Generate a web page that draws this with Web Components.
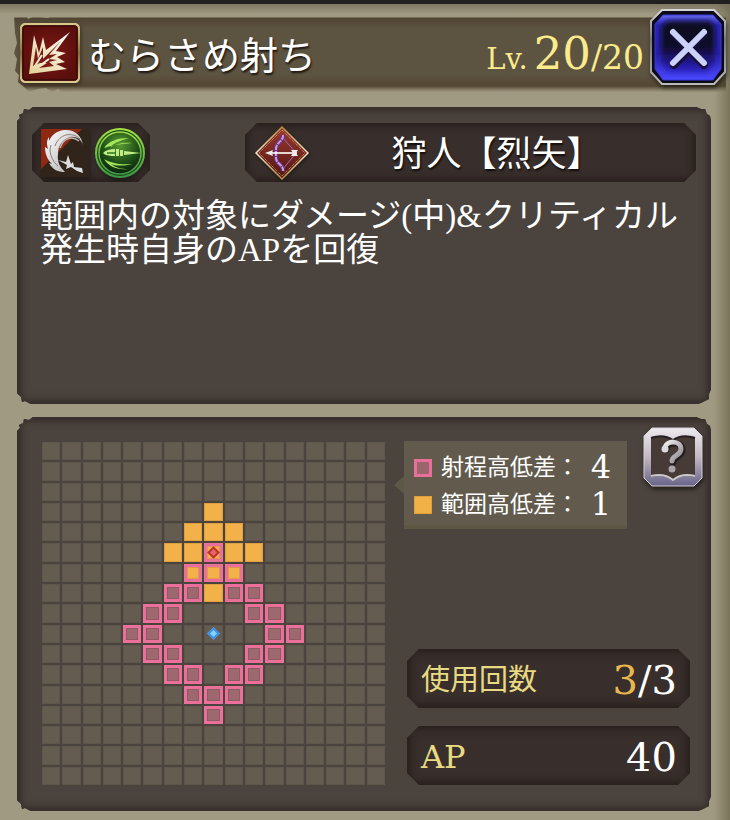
<!DOCTYPE html>
<html lang="ja">
<head>
<meta charset="utf-8">
<meta name="viewport" content="width=device-width, initial-scale=1">
<title>むらさめ射ち</title>
<style>
  body {
    margin: 0;
    min-height: 100vh;
    box-sizing: border-box;
    border-top: 4px solid #211f20;
    background:
      linear-gradient(#6f6855, transparent 14px),
      linear-gradient(to left, #79745a, transparent 16px),
      #a09a82;
    color: #fff;
    font-family: "DejaVu Serif", "Noto Sans CJK JP", serif;
  }
  main {
    display: grid;
    gap: 13px;
    padding: 0 19px 8px 17px;
  }
  h1, h2, p { margin: 0; font: inherit; }
</style>
</head>
<body>
<skill-header>
  <skill-icon slot="icon" name="burst"></skill-icon>
  <h1>むらさめ射ち</h1>
  <level-label slot="level" value="20" max="20"></level-label>
  <icon-button slot="action" kind="close" label="閉じる"></icon-button>
</skill-header>
<main>
  <torn-panel>
    <skill-summary>
      <skill-icon slot="types" name="slash"></skill-icon>
      <skill-icon slot="types" name="pierce"></skill-icon>
      <skill-icon slot="job-icon" name="bow"></skill-icon>
      <h2 slot="job">狩人【烈矢】</h2>
      <p>範囲内の対象にダメージ(中)&amp;クリティカル発生時自身のAPを回復</p>
    </skill-summary>
  </torn-panel>
  <torn-panel>
    <skill-range>
      <range-grid slot="grid"></range-grid>
      <range-legend slot="legend">
        <legend-row kind="range" value="4">射程高低差：</legend-row>
        <legend-row kind="area" value="1">範囲高低差：</legend-row>
      </range-legend>
      <icon-button slot="help" kind="help" label="ヘルプ"></icon-button>
      <stat-row label="使用回数"><b>3</b>/3</stat-row>
      <stat-row label="AP">40</stat-row>
    </skill-range>
  </torn-panel>
</main>

<script>
const define = (name, html) => {
  customElements.define(name, class extends HTMLElement {
    constructor() {
      super();
      this.attachShadow({ mode: "open" }).innerHTML = html;
    }
  });
};

define("skill-header", `
  <style>
    :host {
      position: relative;
      display: flex;
      align-items: center;
      height: 71px;
      margin: 13px 4px 19px 14px;
      padding-left: 6px;
    }
    /* band with a ragged left end */
    .band {
      position: absolute;
      inset: -2px 0 -4px 0;
      z-index: -1;
      background: linear-gradient(transparent 2px, #504433 3px, #5d5341 14px, #5d5341 60px, #544632 71px, #6f6550 73px, transparent 77px);
      clip-path: polygon(0 0, 12px 0, 14px 4px, 20px 1px, 34px 3px, 38px 0, 42px 2px, 100% 2px, 100% 100%, 48px 100%, 44px 74px, 38px 77px, 32px 73px, 24px 74px, 15px 77px, 10px 72px, 4px 67px, 5px 60px, 1px 56px, 3px 44px, 0 38px, 3px 28px, 1px 18px);
    }
    .title {
      flex: 1;
      margin: 6px 0 0 8px;
      font-size: 38px;
      line-height: 48px;
      white-space: nowrap;
      text-shadow: 1px 2px 2px #1c1610;
    }
    slot[name="level"] {
      display: block;
      padding-top: 8px;
    }
    slot[name="action"] {
      display: block;
      align-self: flex-start;
      margin: -8px 0 0 6px;
    }
  </style>
  <div class="band"></div>
  <slot name="icon"></slot>
  <div class="title"><slot></slot></div>
  <slot name="level"></slot>
  <slot name="action"></slot>
`);

define("torn-panel", `
  <style>
    :host {
      display: block;
      background: #4b433d;
      box-shadow: inset 0 0 3px 3px #39302f, inset 0 0 10px 3px #342d28;
      clip-path: polygon(
        0 14px, 3px 11px, 2px 8px, 6px 6px, 7px 2px, 12px 3px, 16px 0,
        calc(100% - 15px) 0, calc(100% - 10px) 2px, calc(100% - 6px) 2px, calc(100% - 4px) 7px, calc(100% - 1px) 9px, 100% 15px,
        100% calc(100% - 15px), calc(100% - 2px) calc(100% - 10px), calc(100% - 2px) calc(100% - 5px), calc(100% - 8px) calc(100% - 2px), calc(100% - 13px) 100%, calc(100% - 18px) 100%,
        14px 100%, 8px calc(100% - 3px), 5px calc(100% - 2px), 4px calc(100% - 7px), 0 calc(100% - 11px)
      );
    }
  </style>
  <slot></slot>
`);

define("cut-box", `
  <style>
    :host {
      display: flex;
      align-items: center;
      box-sizing: border-box;
      height: 59px;
      background: #382f2c;
      box-shadow: inset 0 0 9px 3px #271d1a;
      clip-path: polygon(12px 0, calc(100% - 12px) 0, 100% 12px, 100% calc(100% - 12px), calc(100% - 12px) 100%, 12px 100%, 0 calc(100% - 12px), 0 12px);
    }
  </style>
  <slot></slot>
`);

define("skill-summary", `
  <style>
    :host {
      display: block;
      box-sizing: border-box;
      min-height: 297px;
      padding: 16px 15px;
    }
    .top {
      display: flex;
      justify-content: space-between;
    }
    .types { gap: 6px; padding: 0 5px 0 9px; }
    .job { flex: 0 1 451px; padding: 0 12px 0 10px; }
    .job-name {
      flex: 1;
      padding-top: 2px;
      text-align: center;
      font-size: 35px;
      line-height: 48px;
      white-space: nowrap;
      text-shadow: 1px 2px 2px #120c0a;
    }
    .text {
      padding: 17px 0 0 8px;
      font: 33px/34px "Liberation Serif", "Noto Sans CJK JP", serif;
    }
  </style>
  <div class="top">
    <cut-box class="types"><slot name="types"></slot></cut-box>
    <cut-box class="job">
      <slot name="job-icon"></slot>
      <div class="job-name"><slot name="job"></slot></div>
    </cut-box>
  </div>
  <div class="text"><slot></slot></div>
`);

define("skill-range", `
  <style>
    :host {
      display: grid;
      grid-template-columns: 343fr 286fr;
      gap: 19px;
      padding: 25px 21px 26px 25px;
    }
    .side {
      display: flex;
      flex-direction: column;
      justify-content: space-between;
    }
    .top {
      display: flex;
      justify-content: space-between;
      align-items: flex-start;
    }
    slot[name="help"] {
      display: block;
      margin: -15px -13px 0 0;
    }
    .stats {
      display: grid;
      gap: 18px;
      padding-left: 3px;
    }
  </style>
  <slot name="grid"></slot>
  <div class="side">
    <div class="top">
      <slot name="legend"></slot>
      <slot name="help"></slot>
    </div>
    <div class="stats"><slot></slot></div>
  </div>
`);

define("range-legend", `
  <style>
    :host {
      position: relative;
      display: grid;
      box-sizing: border-box;
      width: 223px;
      margin-top: -1px;
      padding: 8px 16px 2px 10px;
      background: #625b4d;
      border-bottom: 4px solid #5b5742;
    }
    :host::before {
      content: "";
      position: absolute;
      right: 100%;
      top: 35px;
      border: solid transparent;
      border-width: 9px 10px 9px 0;
      border-right-color: #5e5849;
    }
  </style>
  <slot></slot>
`);

customElements.define("legend-row", class extends HTMLElement {
  constructor() {
    super();
    this.attachShadow({ mode: "open" }).innerHTML = `
      <style>
        :host {
          display: flex;
          align-items: center;
          height: 37px;
          font-size: 23px;
          line-height: 37px;
          white-space: nowrap;
        }
        i {
          box-sizing: border-box;
          width: 18px;
          height: 18px;
          margin-right: 9px;
          background: #f2b147;
          border: 1px solid #e09f3b;
        }
        :host([kind="range"]) i {
          background: #9b656c;
          border: 3px solid #ea7099;
        }
        output {
          flex: 1;
          text-align: right;
          font-size: 32px;
        }
      </style>
      <i></i><span><slot></slot></span><output></output>
    `;
  }
  connectedCallback() {
    this.shadowRoot.querySelector("output").textContent = this.getAttribute("value");
  }
});

customElements.define("stat-row", class extends HTMLElement {
  constructor() {
    super();
    this.attachShadow({ mode: "open" }).innerHTML = `
      <style>
        :host { display: block; }
        cut-box { padding: 3px 13px 0 14px; }
        .label {
          flex: 1;
          color: #e8da82;
          font-size: 29px;
          line-height: 40px;
        }
        :host([label="AP"]) .label { font-size: 32px; }
        .value {
          font-size: 40px;
          line-height: 48px;
        }
        ::slotted(b) { color: #e8b84f; font-weight: normal; }
      </style>
      <cut-box>
        <span class="label"></span>
        <span class="value"><slot></slot></span>
      </cut-box>
    `;
  }
  connectedCallback() {
    this.shadowRoot.querySelector(".label").textContent = this.getAttribute("label");
  }
});

customElements.define("level-label", class extends HTMLElement {
  connectedCallback() {
    this.attachShadow({ mode: "open" }).innerHTML = `
      <style>
        :host {
          display: flex;
          align-items: baseline;
          color: #fbeb8c;
          font-size: 29px;
          line-height: 48px;
          white-space: nowrap;
        }
        .now {
          margin-left: 6px;
          font-size: 45px;
        }
        .max { font-size: 33px; }
      </style>
      <span>Lv.</span><span class="now">${this.getAttribute("value")}</span><span class="max">/${this.getAttribute("max")}</span>
    `;
  }
});

// 17 x 17 board. o: area, p: range, b: both, t: target, s: self
const BOARD = [
  "",
  "",
  "",
  "........o",
  ".......ooo",
  "......ootoo",
  ".......bbb",
  "......ppopp",
  ".....pp...pp",
  "....pp..s..pp",
  ".....pp...pp",
  "......pp.pp",
  ".......ppp",
  "........p",
  "",
  "",
  "",
];

customElements.define("range-grid", class extends HTMLElement {
  constructor() {
    super();
    const cells = BOARD
      .map((row) => [...row.padEnd(17, ".")].map((c) => `<i class="${c === "." ? "" : c}"></i>`).join(""))
      .join("");
    this.attachShadow({ mode: "open" }).innerHTML = `
      <style>
        :host {
          display: grid;
          grid-template-columns: repeat(17, 1fr);
          gap: 2px;
          align-self: start;
        }
        i {
          display: grid;
          place-items: center;
          box-sizing: border-box;
          aspect-ratio: 1;
          background: #645c50;
          border: 1px solid #5e564a;
        }
        .o { background: #f3b149; border-color: #dd9f40; }
        .p, .b, .t { border: 3px solid #ea7099; }
        .p { background: #9d686f; box-shadow: inset 0 0 0 1px #8c5c62; }
        .b, .t { background: #f3b149; box-shadow: inset 0 0 0 1px #e09a4e; }
        .t::before, .s::before {
          content: "";
          box-sizing: border-box;
          width: 9px;
          height: 9px;
          rotate: 45deg;
          background: #e06a62;
          border: 2px solid #c0302e;
        }
        .s::before {
          background: #7cd4ff;
          border-color: #3c8fe4;
        }
      </style>
      ${cells}
    `;
  }
});

const ICONS = {
  burst: [60, `
    <defs>
      <linearGradient id="gold" x2="0" y2="1"><stop stop-color="#d8c88a"/><stop offset=".5" stop-color="#8c6d3a"/><stop offset="1" stop-color="#dccb90"/></linearGradient>
      <radialGradient id="red"><stop stop-color="#7e1712"/><stop offset="1" stop-color="#5a0f0d"/></radialGradient>
      <linearGradient id="ray" x1="1" x2="0" y2="1"><stop stop-color="#fff"/><stop offset="1" stop-color="#e2cf94"/></linearGradient>
    </defs>
    <rect x="1" y="1" width="58" height="58" rx="5" fill="url(#red)" stroke="url(#gold)" stroke-width="2.5"/>
    <rect x="3" y="3" width="54" height="54" rx="3" fill="none" stroke="#390a08" stroke-width="1.5"/>
    <path fill="url(#ray)" d="M9 51 14 12 19 30 23 14 26 27 50 9 36 28 46 30 37 34 45 39 36 41 47 46Z"/>
    <path fill="#7a1914" d="M13 43 16 24 18 36 23 24 23 36 41 18 29 32 37 31 29 36 37 37 29 39 34 43 19 45 27 40 20 40Z"/>
    <path fill="none" stroke="url(#ray)" stroke-width="2" d="M11 49 22 32M11 49 29 36"/>
  `],
  slash: [48, `
    <defs><linearGradient id="silver" x2="1" y2="1"><stop stop-color="#fff"/><stop offset="1" stop-color="#a8a8a8"/></linearGradient></defs>
    <path fill="#30241b" d="M0 0h48v48H0z"/>
    <path fill="#8e2a14" d="M0 0h41L0 40z"/>
    <path fill="url(#silver)" d="M42 17C41 6 33 0 23 1 15 2 10 7 8 12V8C5 12 6 16 7 20L4 18c0 8 3 13 7 17l-3-1c4 7 9 9 16 9-5-5-8-10-7-18 0-9 5-15 12-17 7-1 12 3 13 9z"/>
    <path fill="none" stroke="#8b817a" d="M39 10C31 2 18 5 14 17M10 16C7 24 12 33 17 37"/>
    <path fill="none" stroke="#b9b9b9" stroke-width="1.5" d="M38 12C30 6 22 10 19 19"/>
    <path fill="#ddd" d="m27 26 3 9 2-2 1 5 8 1 1 5-6-2-6-4-5 2 1-4-9-5 8 2z"/>
  `],
  pierce: [50, `
    <defs>
      <radialGradient id="green" cx=".5" cy=".3" r=".7"><stop stop-color="#5a9c31"/><stop offset=".6" stop-color="#205218"/><stop offset="1" stop-color="#0b220c"/></radialGradient>
      <linearGradient id="rim" x2="0" y2="1"><stop stop-color="#a3e045"/><stop offset="1" stop-color="#3d9746"/></linearGradient>
    </defs>
    <circle cx="25" cy="25" r="24" fill="#1d4a19" stroke="url(#rim)" stroke-width="2"/>
    <circle cx="25" cy="25" r="21" fill="url(#green)" stroke="url(#rim)" stroke-width="1.5"/>
    <path fill="#a5e45b" d="M9 20C14 13 22 10 34 10 23 13 18 16 15 19c7-3 13-5 22-4-11 1-19 2-28 5zM9 31c7 4 15 6 29 5-10 2-17 2-22 0 5 4 10 5 17 5C22 42 14 39 9 31z"/>
    <path fill="#c0ed86" d="M8 25c3-3 7-4 12-4v7c-5 0-9 0-12-3zM21 21h3v7h-3zM25 22h3v6h-3zM29 23l17 2-17 2z"/>
    <path fill="#4d9632" d="M12 24h8v2h-8z"/>
  `],
  bow: [54, `
    <defs>
      <linearGradient id="gem" x2="0" y2="1"><stop stop-color="#9c3a30"/><stop offset="1" stop-color="#501511"/></linearGradient>
      <linearGradient id="edge" x2="0" y2="1"><stop stop-color="#b98b42"/><stop offset=".5" stop-color="#f4e9cf"/><stop offset="1" stop-color="#b98b42"/></linearGradient>
    </defs>
    <path fill="url(#gem)" stroke="url(#edge)" stroke-width="1.500" d="M27 1 53 27 27 53 1 27z"/>
    <path fill="none" stroke="#d4aa6b" stroke-dasharray="1 1" d="M27 4 50 27 27 50 4 27z"/>
    <path fill="none" stroke="#a267b7" d="m28 12 13 15-13 16"/>
    <path fill="none" stroke="#6b337d" stroke-width="4" d="M28 9c1 6-7 7-7 14v9c0 6 8 7 7 13"/>
    <path fill="none" stroke="#c99be6" stroke-width="2" stroke-dasharray="5 1" d="M28 9c1 6-7 7-7 14v9c0 6 8 7 7 13"/>
    <path fill="none" stroke="#fff" stroke-width="1.600" d="M15 27h27"/>
    <path fill="#eee" d="m10 27 8-3-1 3 1 3zM36 24h7l-2 3 2 3h-7l2-3z"/>
  `],
};

customElements.define("skill-icon", class extends HTMLElement {
  connectedCallback() {
    const [size, shapes] = ICONS[this.getAttribute("name")];
    this.attachShadow({ mode: "open" }).innerHTML = `
      <style>
        :host { display: block; flex: none; }
        svg { display: block; filter: drop-shadow(1px 2px 2px #0006); }
      </style>
      <svg width="${size}" height="${size}" viewBox="0 0 ${size} ${size}" aria-hidden="true">${shapes}</svg>
    `;
  }
});

const BUTTONS = {
  close: [76, `
    <defs>
      <linearGradient id="blue" x2="0" y2="1"><stop stop-color="#6a6cf0"/><stop offset=".15" stop-color="#2a26b8"/><stop offset=".6" stop-color="#2921ae"/><stop offset="1" stop-color="#4a48ff"/></linearGradient>
      <linearGradient id="dark" x2="0" y2="1"><stop stop-color="#0b0820"/><stop offset=".5" stop-color="#100a28"/><stop offset="1" stop-color="#2c22c8"/></linearGradient>
      <linearGradient id="steel" x2="0" y2="1"><stop stop-color="#d6d6d8"/><stop offset=".4" stop-color="#77777c"/><stop offset="1" stop-color="#b9bcb6"/></linearGradient>
      <filter id="soft"><feGaussianBlur stdDeviation="2.500"/></filter>
    </defs>
    <path fill="#0c0a16" stroke="url(#steel)" stroke-width="2" d="M12 1h52l11 11v51L64 75H12L1 63V12z"/>
    <path fill="url(#blue)" stroke="#3835d8" d="M13 6h50l8 9v45l-8 11H13L5 60V15z"/>
    <path fill="url(#dark)" filter="url(#soft)" d="M17 12h43l5 6v36l-7 9H18l-7-9V18z"/>
    <path fill="none" stroke="#15103c" stroke-width="8" stroke-linecap="round" d="m24 25 30 31m0-31L24 56"/>
    <path fill="none" stroke="#cdd2fb" stroke-width="6" stroke-linecap="round" d="m23 23 31 31m0-31L23 54"/>
  `],
  help: [60, `
    <defs>
      <linearGradient id="frame" x2="0" y2="1"><stop stop-color="#eee9ee"/><stop offset=".5" stop-color="#c3b8c1"/><stop offset="1" stop-color="#68638a"/></linearGradient>
      <linearGradient id="mark" x2="1" y2="1"><stop stop-color="#f2eff0"/><stop offset="1" stop-color="#8d878b"/></linearGradient>
    </defs>
    <path fill="url(#frame)" stroke="#d5cfd8" d="M9 1h42l8 8v42l-8 8H9l-8-8V9z"/>
    <path fill="#463b37" d="M8 10c9-2 16-1 22 3 6-4 13-5 22-3v40c-9-2-16-1-22 4-6-5-13-6-22-4z"/>
    <path fill="none" stroke="#262022" stroke-width="2" d="M8 11c9-3 16-2 22 2 6-4 13-5 22-2"/>
    <path fill="none" stroke="#cbc8cb" stroke-width="2" d="M8 49c9-2 16-1 22 4 6-5 13-6 22-4"/>
    <path fill="none" stroke="#241d1e" stroke-width="7" stroke-linecap="round" d="M23 22c1-8 16-8 16 1 0 7-9 6-9 12"/>
    <path fill="none" stroke="url(#mark)" stroke-width="5" stroke-linecap="round" d="M22 21c1-8 16-8 16 1 0 7-9 6-9 12"/>
    <circle cx="22" cy="22" r="3.500" fill="#dedbdd"/>
    <circle cx="29" cy="42" r="3.500" fill="#aaa5a8"/>
  `],
};

customElements.define("icon-button", class extends HTMLElement {
  connectedCallback() {
    const [size, shapes] = BUTTONS[this.getAttribute("kind")];
    this.attachShadow({ mode: "open" }).innerHTML = `
      <style>
        :host { display: block; flex: none; }
        button {
          display: block;
          padding: 0;
          border: 0;
          background: none;
          cursor: pointer;
        }
        svg { display: block; filter: drop-shadow(1px 3px 2px #0008); }
      </style>
      <button type="button" aria-label="${this.getAttribute("label")}">
        <svg width="${size}" height="${size}" viewBox="0 0 ${size} ${size}">${shapes}</svg>
      </button>
    `;
  }
});
</script>
</body>
</html>
